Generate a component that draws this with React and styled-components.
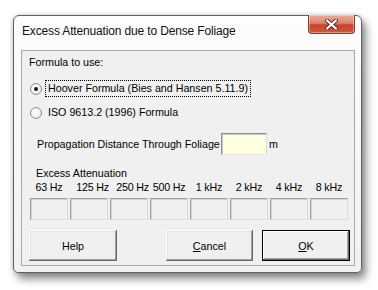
import React from 'react'
import styled, { createGlobalStyle } from 'styled-components'

const GlobalStyle = createGlobalStyle`
  html, body {
    margin: 0;
    padding: 0;
    background: #ffffff;
  }
  * {
    box-sizing: border-box;
  }
`

const Page = styled.div`
  padding: 15px 0 0 13px;
  width: 378px;
  height: 290px;
  font-family: 'Liberation Sans', Tahoma, sans-serif;
`

const Window = styled.div`
  width: 349px;
  height: 258px;
  display: flex;
  flex-direction: column;
  padding: 0 6px 6px 7px;
  border: 1px solid #626262;
  border-radius: 6px 6px 5px 5px;
  background: linear-gradient(180deg, #fdfdfd 0%, #f6f6f6 60%, #f1f1f1 100%);
  box-shadow: 4px 6px 9px rgba(0, 0, 0, 0.45), 0 0 4px rgba(0, 0, 0, 0.2);
`

const TitleBar = styled.div`
  height: 34px;
  display: flex;
  justify-content: space-between;
  align-items: flex-start;
`

const TitleText = styled.div`
  padding: 8px 0 0 1px;
  font-family: 'Liberation Sans', Arial, sans-serif;
  font-size: 12px;
  letter-spacing: -0.15px;
  color: #111;
`

const CloseButton = styled.div`
  width: 47px;
  height: 19px;
  margin-top: -1px;
  display: flex;
  align-items: center;
  justify-content: center;
  border: 1px solid #8a3a2c;
  border-top: none;
  border-radius: 0 0 4px 4px;
  background: linear-gradient(180deg, #e9aa9c 0%, #dc8572 45%, #c8432b 55%, #cf5a40 100%);
  box-shadow: inset 0 0 0 1px rgba(255, 255, 255, 0.35);
`

const Client = styled.div`
  flex: 1;
  display: flex;
  flex-direction: column;
  border: 1px solid #a9a9a9;
  background: #f0f0f0;
  font-family: 'Liberation Sans', Tahoma, sans-serif;
  font-size: 10.7px;
  color: #000;
`

const Label = styled.div`
  height: 13px;
  line-height: 13px;
  margin-top: ${({ $top }) => $top}px;
  padding-left: ${({ $left }) => $left}px;
  white-space: nowrap;
`

const RadioRow = styled.div`
  height: 17px;
  display: flex;
  align-items: center;
  margin-top: ${({ $top }) => $top}px;
  padding-left: 8px;
`

const RadioCircle = styled.span`
  width: 12px;
  height: 12px;
  border-radius: 50%;
  border: 1px solid #8e8f8f;
  background: radial-gradient(circle at 40% 40%, #ffffff 0%, #f2f2f2 50%, #d6d6d6 100%);
  display: flex;
  align-items: center;
  justify-content: center;
  margin-right: 3px;
  flex-shrink: 0;
  &::after {
    content: '';
    width: 4px;
    height: 4px;
    border-radius: 50%;
    background: ${({ $checked }) => ($checked ? '#1a1a1a' : 'transparent')};
  }
`

const RadioText = styled.span`
  height: 17px;
  line-height: 15px;
  padding: 0 2px;
  border: 1px dotted ${({ $focus }) => ($focus ? '#000' : 'transparent')};
  white-space: nowrap;
`

const DistanceRow = styled.div`
  display: flex;
  align-items: center;
  margin-top: 12px;
  padding-left: 15px;
  height: 22px;
`

const DistanceLabel = styled.span`
  width: 184px;
  white-space: nowrap;
`

const TextBox = styled.div`
  width: 46px;
  height: 22px;
  background: #ffffe1;
  border: 1px solid;
  border-color: #8f8f8f #dcdcdc #e6e6e6 #8f8f8f;
  box-shadow: inset 1px 1px 0 #c8c8c8;
  margin-right: 2px;
`

const FreqGrid = styled.div`
  display: grid;
  grid-template-columns: repeat(8, 38px);
  column-gap: 2px;
  padding-left: 8px;
  margin-top: ${({ $top }) => $top}px;
`

const FreqLabel = styled.div`
  height: 13px;
  line-height: 13px;
  display: flex;
  justify-content: center;
  white-space: nowrap;
  letter-spacing: -0.2px;
  padding-left: ${({ $shift }) => $shift || 0}px;
`

const FreqBox = styled.div`
  height: 22px;
  border: 1px solid;
  border-color: #a0a0a0 #dadada #dadada #a0a0a0;
  box-shadow: inset 1px 1px 0 #d4d4d4;
  background: #f0f0f0;
`

const ButtonRow = styled.div`
  display: flex;
  justify-content: space-between;
  margin-top: 10px;
  padding: 0 4px 0 7px;
`

const ButtonGroup = styled.div`
  display: flex;
  gap: 9px;
`

const Button = styled.div`
  width: ${({ $w }) => $w}px;
  height: 31px;
  display: flex;
  align-items: center;
  justify-content: center;
  background: #f0f0f0;
  border: ${({ $default }) => ($default ? '1px solid #000' : 'none')};
  box-shadow: ${({ $default }) =>
    $default
      ? 'inset -1px -1px 0 #696969, inset 1px 1px 0 #ffffff, inset -2px -2px 0 #a0a0a0'
      : 'inset -1px -1px 0 #696969, inset 1px 1px 0 #ffffff, inset -2px -2px 0 #a0a0a0, inset 2px 2px 0 #e3e3e3'};
  u {
    text-decoration: underline;
    text-underline-offset: 1px;
  }
`

const freqs = ['63 Hz', '125 Hz', '250 Hz', '500 Hz', '1 kHz', '2 kHz', '4 kHz', '8 kHz']
const shifts = { '125 Hz': 7, '250 Hz': 7 }

const App = () => {
  return (
    <Page>
      <GlobalStyle />
      <Window>
        <TitleBar>
          <TitleText>Excess Attenuation due to Dense Foliage</TitleText>
          <CloseButton>
            <svg width="13" height="11" viewBox="0 0 13 11">
              <path d="M2 1.5 L11 9.5 M11 1.5 L2 9.5" stroke="#5a2a22" strokeWidth="4" strokeLinecap="round" />
              <path d="M2 1.5 L11 9.5 M11 1.5 L2 9.5" stroke="#ffffff" strokeWidth="2.2" strokeLinecap="round" />
            </svg>
          </CloseButton>
        </TitleBar>
        <Client>
          <Label $top={5} $left={7}>Formula to use:</Label>
          <RadioRow $top={11}>
            <RadioCircle $checked />
            <RadioText $focus>Hoover Formula (Bies and Hansen 5.11.9)</RadioText>
          </RadioRow>
          <RadioRow $top={7}>
            <RadioCircle />
            <RadioText>ISO 9613.2 (1996) Formula</RadioText>
          </RadioRow>
          <DistanceRow>
            <DistanceLabel>Propagation Distance Through Foliage</DistanceLabel>
            <TextBox />
            <span>m</span>
          </DistanceRow>
          <Label $top={12} $left={14}>Excess Attenuation</Label>
          <FreqGrid $top={1}>
            {freqs.map((f) => (
              <FreqLabel key={f} $shift={shifts[f]}>{f}</FreqLabel>
            ))}
          </FreqGrid>
          <FreqGrid $top={4}>
            {freqs.map((f) => (
              <FreqBox key={f} />
            ))}
          </FreqGrid>
          <ButtonRow>
            <Button $w={88}>Help</Button>
            <ButtonGroup>
              <Button $w={87}><span><u>C</u>ancel</span></Button>
              <Button $w={88} $default><span><u>O</u>K</span></Button>
            </ButtonGroup>
          </ButtonRow>
        </Client>
      </Window>
    </Page>
  )
}

export default App
